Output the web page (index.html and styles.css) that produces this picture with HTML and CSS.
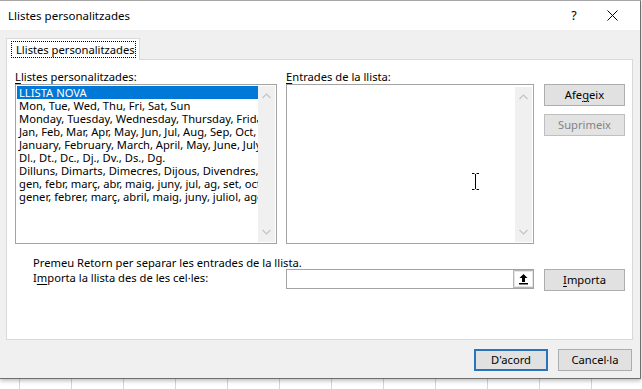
FILE: index.html
```html
<!DOCTYPE html>
<html>
<head>
<meta charset="utf-8">
<link rel="stylesheet" href="styles.css">
</head>
<body>
<div class="screen">
  <div class="dialog">
    <div class="titlebar">
      <span class="title">Llistes personalitzades</span>
      <span class="help">?</span>
      <span class="close"><svg width="11" height="11" viewBox="0 0 11 11"><path d="M0.5 0.5L10.5 10.5M10.5 0.5L0.5 10.5" stroke="#000" stroke-width="1" fill="none"/></svg></span>
    </div>
    <div class="body">
      <div class="tabs"><div class="tab"><span class="focus">Llistes personalitzades</span></div></div>
      <div class="panel">
        <div class="grid">
          <div class="lbl"><u>L</u>listes personalitzades:</div>
          <div class="lbl"><u>E</u>ntrades de la llista:</div>
          <div></div>
          <div class="listbox">
            <ul class="items">
              <li class="sel">LLISTA NOVA</li>
              <li>Mon, Tue, Wed, Thu, Fri, Sat, Sun</li>
              <li>Monday, Tuesday, Wednesday, Thursday, Friday, Saturday, Sunday</li>
              <li>Jan, Feb, Mar, Apr, May, Jun, Jul, Aug, Sep, Oct, Nov, Dec</li>
              <li>January, February, March, April, May, June, July, August</li>
              <li>Dl., Dt., Dc., Dj., Dv., Ds., Dg.</li>
              <li>Dilluns, Dimarts, Dimecres, Dijous, Divendres, Dissabte</li>
              <li>gen, febr, març, abr, maig, juny, jul, ag, set, oct, nov, des</li>
              <li>gener, febrer, març, abril, maig, juny, juliol, agost</li>
            </ul>
            <div class="scroll">
              <svg width="9" height="6" viewBox="0 0 9 6"><path d="M0.5 5L4.5 1L8.5 5" stroke="#c4c4c4" stroke-width="1.2" fill="none"/></svg>
              <svg width="9" height="6" viewBox="0 0 9 6"><path d="M0.5 1L4.5 5L8.5 1" stroke="#c4c4c4" stroke-width="1.2" fill="none"/></svg>
            </div>
          </div>
          <div class="listbox entries">
            <div class="items"></div>
            <div class="scroll">
              <svg width="9" height="6" viewBox="0 0 9 6"><path d="M0.5 5L4.5 1L8.5 5" stroke="#c4c4c4" stroke-width="1.2" fill="none"/></svg>
              <svg width="9" height="6" viewBox="0 0 9 6"><path d="M0.5 1L4.5 5L8.5 1" stroke="#c4c4c4" stroke-width="1.2" fill="none"/></svg>
            </div>
            <svg class="ibeam" width="7" height="17" viewBox="0 0 7 17"><path d="M0 0.5H2.5M4.5 0.5H7M3.5 1V16M0 16.5H2.5M4.5 16.5H7" stroke="#000" stroke-width="1" fill="none"/></svg>
          </div>
          <div class="btncol">
            <button class="btn">Afe<u>g</u>eix</button>
            <button class="btn disabled">Suprimeix</button>
          </div>
        </div>
        <div class="bottom">
          <div class="hints">
            <div class="hint">Premeu Retorn per separar les entrades de la llista.</div>
            <div class="hint">I<u>m</u>porta la llista des de les cel·les:</div>
          </div>
          <div class="importrow">
            <div class="refbox">
              <div class="reftext"></div>
              <div class="refbtn"><svg width="11" height="12" viewBox="0 0 11 12"><path d="M5.5 1L1.5 5H4V9H7V5H9.5Z" fill="#000"/><rect x="1" y="10" width="9" height="1.5" fill="#000"/></svg></div>
            </div>
            <button class="btn"><u>I</u>mporta</button>
          </div>
        </div>
      </div>
      <div class="footer">
        <button class="btn default">D'acord</button>
        <button class="btn">Cancel·la</button>
      </div>
    </div>
  </div>
  <div class="sheet">
    <div class="cell first"></div><div class="cell"></div><div class="cell"></div><div class="cell"></div><div class="cell"></div><div class="cell"></div><div class="cell"></div><div class="cell"></div><div class="cell"></div><div class="cell"></div><div class="cell"></div><div class="cell"></div><div class="cell"></div>
  </div>
</div>
</body>
</html>
```
FILE: styles.css
```css
* { box-sizing: border-box; }
html, body { margin: 0; padding: 0; }
body {
  width: 642px;
  height: 389px;
  overflow: hidden;
  background: #ffffff;
  font-family: "Noto Sans", "Open Sans", sans-serif;
  font-size: 11.2px;
  color: #000;
}
u { text-decoration: underline; text-underline-offset: 2px; }

.screen { width: 642px; height: 389px; display: flex; flex-direction: column; }

.dialog {
  width: 641px;
  height: 379px;
  border-top: 1px solid #a6a6a6;
  border-right: 1px solid #6f6f6f;
  border-bottom: 1px solid #6f6f6f;
  display: flex;
  flex-direction: column;
  box-shadow: 0 2px 4px rgba(0,0,0,0.25);
  position: relative;
  z-index: 1;
}

.titlebar {
  height: 29px;
  background: #fff;
  display: flex;
  align-items: center;
  padding-left: 8px;
}
.title { flex: 1; font-size: 11.5px; line-height: 16px; padding-top: 1px; }
.help { width: 16px; font-size: 12.5px; line-height: 16px; margin-right: 25px; text-align: center; }
.close { width: 11px; height: 11px; margin-right: 22px; display: flex; }

.body {
  flex: 1;
  background: #f0f0f0;
  padding: 8px 8px 0 6px;
  display: flex;
  flex-direction: column;
}

.tabs { display: flex; height: 21px; }
.tab {
  width: 134px;
  height: 22px;
  background: #fff;
  border: 1px solid #d9d9d9;
  border-bottom: none;
  padding: 2px 0 0 4px;
  position: relative;
  z-index: 2;
}
.focus {
  display: inline-block;
  border: 1px dotted #000;
  padding: 0 4px 0 4px;
  width: 125px;
  height: 17px;
  line-height: 15px;
  white-space: nowrap;
}

.panel {
  width: 627px;
  height: 281px;
  background: #fff;
  border: 1px solid #d9d9d9;
  padding: 9px 0 0 8px;
  display: flex;
  flex-direction: column;
}

.grid {
  display: grid;
  grid-template-columns: 262px 248px 81px;
  grid-template-rows: 15px 160px;
  column-gap: 9px;
}
.grid > :nth-child(3n) { margin-left: 1px; }
.lbl { line-height: 15px; white-space: nowrap; }

.listbox {
  border: 1px solid #a3a3a3;
  display: flex;
  position: relative;
  background: #fff;
  overflow: hidden;
}
.items {
  list-style: none;
  margin: 0;
  padding: 1px 0 0 1px;
  flex: 1;
  min-width: 0;
  overflow: hidden;
}
.items li {
  height: 13px;
  line-height: 13px;
  padding-left: 2px;
  white-space: nowrap;
}
.items li.sel { background: #0078d7; color: #fff; }

.scroll {
  width: 17px;
  margin: 1px 1px 1px 0;
  background: #f0f0f0;
  display: flex;
  flex-direction: column;
  justify-content: space-between;
  align-items: center;
  padding: 7px 0 7px;
  position: relative;
  z-index: 1;
}
.entries .scroll { margin-top: 2px; }

.ibeam { position: absolute; left: 185px; top: 88px; }

.btncol { display: flex; flex-direction: column; gap: 8px; }

.btn {
  font: inherit;
  font-size: 11.2px;
  color: #000;
  height: 22px;
  width: 81px;
  padding: 0;
  background: #e1e1e1;
  border: 1px solid #adadad;
  line-height: 18px;
}
.btn.disabled { color: #838383; background: #e3e3e3; border-color: #bfbfbf; }
.btn.default { border: 2px solid #2a74b8; width: 74px; }

.bottom {
  margin-top: 10px;
  display: grid;
  grid-template-columns: 271px 339px;
}
.hints { padding-left: 18px; padding-top: 1px; }
.hint { line-height: 15px; white-space: nowrap; }

.importrow {
  padding-top: 15px;
  display: flex;
  gap: 10px;
  align-items: flex-start;
}
.refbox {
  width: 248px;
  height: 20px;
  border: 1px solid #a3a3a3;
  display: flex;
  background: #fff;
}
.reftext { flex: 1; }
.refbtn {
  width: 20px;
  height: 18px;
  border: 1px solid #b5b5b5;
  border-right: none;
  background: #fff;
  display: flex;
  align-items: center;
  justify-content: center;
  box-shadow: inset 0 0 0 1px #e6e6e6;
}

.footer {
  padding-top: 9px;
  display: flex;
  justify-content: flex-end;
  gap: 10px;
  padding-right: 0;
}
.footer .btn { width: 74px; }

.sheet {
  display: flex;
  height: 10px;
  background: #fff;
}
.cell { width: 52px; flex: none; border-right: 1px solid #d6d6d6; }
.cell.first { width: 20px; }
```
